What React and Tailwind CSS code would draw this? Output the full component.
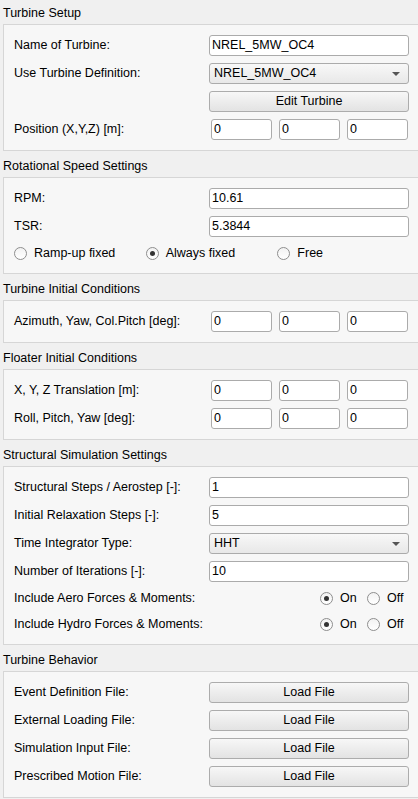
import React from "react";

const font = { fontFamily: '"Liberation Sans", Arial, sans-serif' };

const TextInput = ({ value, className = "" }) => (
  <div
    className={`h-[21px] bg-white border border-[#ababab] rounded-[3px] pl-[2px] flex items-center leading-none text-black ${className}`}
  >
    {value}
  </div>
);

const Combo = ({ value }) => (
  <div className="h-[21px] w-full border border-[#ababab] rounded-[3px] bg-gradient-to-b from-[#f8f8f8] to-[#e8e8e8] pl-[4px] pr-[8px] flex items-center justify-between leading-none">
    <span>{value}</span>
    <svg width="8" height="4" viewBox="0 0 8 4">
      <path d="M0 0 L8 0 L4 4 Z" fill="#555" />
    </svg>
  </div>
);

const Button = ({ label }) => (
  <div className="h-[21px] w-full border border-[#acacac] rounded-[3px] bg-gradient-to-b from-[#f7f7f7] to-[#e3e3e3] flex items-center justify-center leading-none">
    {label}
  </div>
);

const Radio = ({ checked, label }) => (
  <div className="flex items-center gap-[7px] leading-none">
    <span className="w-[13px] h-[13px] rounded-full border border-[#8e8e8e] bg-gradient-to-b from-[#f2f2f2] to-[#ffffff] flex items-center justify-center shrink-0">
      {checked && <span className="w-[5px] h-[5px] rounded-full bg-[#333]" />}
    </span>
    <span>{label}</span>
  </div>
);

const Triple = ({ values }) => (
  <div className="flex gap-[7px] pl-[2px]">
    {values.map((v, i) => (
      <TextInput key={i} value={v} className="w-[61px]" />
    ))}
  </div>
);

const Row = ({ label, children, h = "h-[21px]" }) => (
  <div className={`flex items-center ${h}`}>
    <div className="w-[195px] shrink-0 leading-none">{label}</div>
    <div className="w-[200px]">{children}</div>
  </div>
);

const OnOff = () => (
  <div className="flex justify-end">
    <div className="w-[47px]">
      <Radio checked label="On" />
    </div>
    <div className="w-[42px]">
      <Radio label="Off" />
    </div>
  </div>
);

const Section = ({ title, first, children }) => (
  <div>
    <div className={`${first ? "h-[24px] pt-[2px]" : "h-[26px] pt-[4px]"} flex items-center pl-[3px] leading-none`}>
      {title}
    </div>
    <div className="ml-[3px] w-[416px] border border-[#d6d6d6] bg-[#f7f7f7] pl-[10px] pr-[9px] pt-[10px] pb-[10px] flex flex-col gap-[7px]">
      {children}
    </div>
  </div>
);

export default function App() {
  return (
    <div
      className="w-[418px] h-[799px] overflow-hidden bg-[#f0f0f0] text-[12.5px] text-black"
      style={font}
    >
      <Section title="Turbine Setup" first>
        <Row label="Name of Turbine:">
          <TextInput value="NREL_5MW_OC4" />
        </Row>
        <Row label="Use Turbine Definition:">
          <Combo value="NREL_5MW_OC4" />
        </Row>
        <Row label="">
          <Button label="Edit Turbine" />
        </Row>
        <Row label="Position (X,Y,Z) [m]:">
          <Triple values={["0", "0", "0"]} />
        </Row>
      </Section>

      <Section title="Rotational Speed Settings">
        <Row label="RPM:">
          <TextInput value="10.61" />
        </Row>
        <Row label="TSR:">
          <TextInput value="5.3844" />
        </Row>
        <div className="grid grid-cols-3 h-[19px] items-center">
          <Radio label="Ramp-up fixed" />
          <Radio checked label="Always fixed" />
          <Radio label="Free" />
        </div>
      </Section>

      <Section title="Turbine Initial Conditions">
        <Row label="Azimuth, Yaw, Col.Pitch [deg]:">
          <Triple values={["0", "0", "0"]} />
        </Row>
      </Section>

      <Section title="Floater Initial Conditions">
        <Row label="X, Y, Z Translation [m]:">
          <Triple values={["0", "0", "0"]} />
        </Row>
        <Row label="Roll, Pitch, Yaw [deg]:">
          <Triple values={["0", "0", "0"]} />
        </Row>
      </Section>

      <Section title="Structural Simulation Settings">
        <Row label="Structural Steps / Aerostep [-]:">
          <TextInput value="1" />
        </Row>
        <Row label="Initial Relaxation Steps [-]:">
          <TextInput value="5" />
        </Row>
        <Row label="Time Integrator Type:">
          <Combo value="HHT" />
        </Row>
        <Row label="Number of Iterations [-]:">
          <TextInput value="10" />
        </Row>
        <Row label="Include Aero Forces & Moments:" h="h-[19px]">
          <OnOff />
        </Row>
        <Row label="Include Hydro Forces & Moments:" h="h-[19px]">
          <OnOff />
        </Row>
      </Section>

      <Section title="Turbine Behavior">
        <Row label="Event Definition File:">
          <Button label="Load File" />
        </Row>
        <Row label="External Loading File:">
          <Button label="Load File" />
        </Row>
        <Row label="Simulation Input File:">
          <Button label="Load File" />
        </Row>
        <Row label="Prescribed Motion File:">
          <Button label="Load File" />
        </Row>
      </Section>
    </div>
  );
}
